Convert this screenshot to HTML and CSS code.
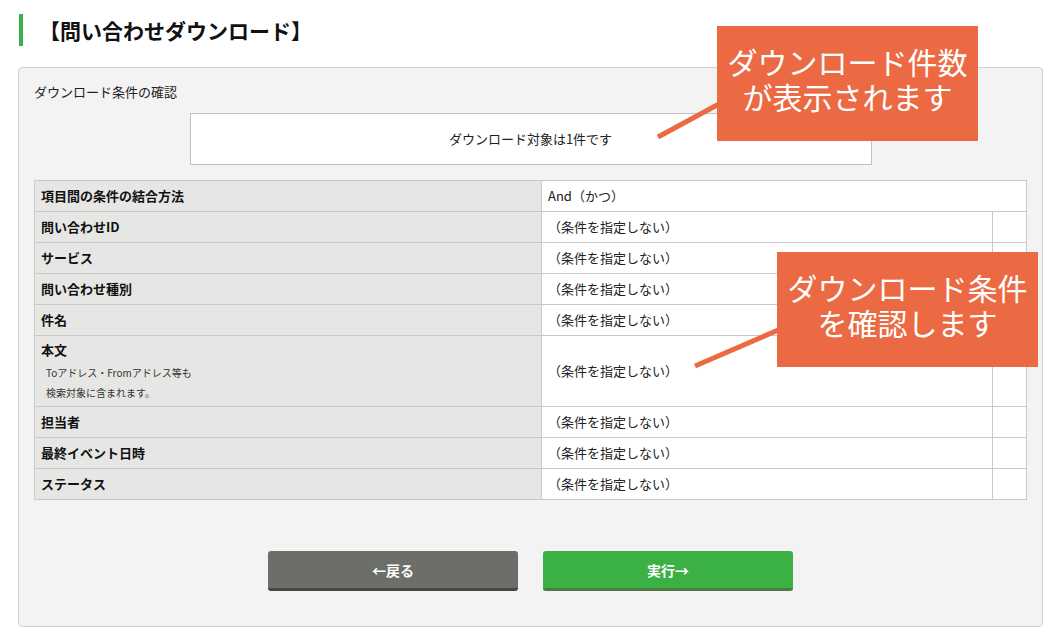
FILE: index.html
```html
<!DOCTYPE html>
<html lang="ja">
<head>
<meta charset="utf-8">
<title>問い合わせダウンロード</title>
<link rel="stylesheet" href="styles.css">
</head>
<body>
<div class="page">
  <h1 class="title">【問い合わせダウンロード】</h1>
  <section class="panel">
    <p class="panel-heading">ダウンロード条件の確認</p>
    <div class="count-box">ダウンロード対象は1件です</div>
    <table class="cond">
      <colgroup><col class="c-label"><col class="c-value"><col class="c-extra"></colgroup>
      <tr><th>項目間の条件の結合方法</th><td colspan="2">And（かつ）</td></tr>
      <tr><th>問い合わせID</th><td>（条件を指定しない）</td><td></td></tr>
      <tr><th>サービス</th><td>（条件を指定しない）</td><td></td></tr>
      <tr><th>問い合わせ種別</th><td>（条件を指定しない）</td><td></td></tr>
      <tr><th>件名</th><td>（条件を指定しない）</td><td></td></tr>
      <tr class="tall"><th><span class="lbl">本文</span><span class="note">Toアドレス・Fromアドレス等も</span><span class="note">検索対象に含まれます。</span></th><td>（条件を指定しない）</td><td></td></tr>
      <tr><th>担当者</th><td>（条件を指定しない）</td><td></td></tr>
      <tr><th>最終イベント日時</th><td>（条件を指定しない）</td><td></td></tr>
      <tr><th>ステータス</th><td>（条件を指定しない）</td><td></td></tr>
    </table>
    <div class="actions">
      <button class="btn btn-back">←戻る</button>
      <button class="btn btn-run">実行→</button>
    </div>
  </section>
  <svg class="pointers" width="1052" height="636" viewBox="0 0 1052 636">
    <line x1="658" y1="137" x2="730" y2="98" />
    <line x1="695" y1="366" x2="790" y2="325" />
  </svg>
  <div class="callout callout-count">ダウンロード件数<br>が表示されます</div>
  <div class="callout callout-cond">ダウンロード条件<br>を確認します</div>
</div>
</body>
</html>
```

FILE: styles.css
```css
html, body {
  margin: 0;
  padding: 0;
  background: #ffffff;
}

body {
  font-family: "Noto Sans CJK JP", "Noto Sans", sans-serif;
  color: #222222;
}

.page {
  position: relative;
  width: 1052px;
  height: 636px;
  box-sizing: border-box;
  padding: 14px 9px 0 18px;
  overflow: hidden;
}

.title {
  margin: 0 0 21px 1px;
  border-left: 4px solid #3cb14a;
  padding-left: 16px;
  font-size: 21px;
  font-weight: bold;
  line-height: 32px;
  color: #111111;
}

.panel {
  background: #f3f3f3;
  border: 1px solid #d2d2d2;
  border-radius: 4px;
  padding: 14px 15px 35px;
}

.panel-heading {
  margin: 0;
  font-size: 13px;
  line-height: 20px;
  color: #222222;
}

.count-box {
  width: 682px;
  height: 52px;
  box-sizing: border-box;
  margin: 11px auto 0;
  background: #ffffff;
  border: 1px solid #c2c2c2;
  font-size: 13px;
  line-height: 50px;
  text-align: center;
  color: #222222;
}

.cond {
  width: 100%;
  margin-top: 15px;
  border-collapse: collapse;
  table-layout: fixed;
  font-size: 13px;
}

.c-label { width: 507px; }
.c-extra { width: 34px; }

.cond th,
.cond td {
  border: 1px solid #c9c9c9;
  height: 30px;
  padding: 0 6px;
  line-height: 20px;
  text-align: left;
  vertical-align: middle;
}

.cond th {
  background: #e6e7e4;
  font-weight: bold;
  color: #111111;
}

.cond td {
  background: #ffffff;
  color: #222222;
}

.cond .tall th {
  height: auto;
  padding-top: 4px;
  padding-bottom: 3px;
  vertical-align: top;
}

.lbl {
  display: block;
}

.note {
  display: block;
  margin: 3px 0 0 5px;
  font-size: 10px;
  font-weight: normal;
  line-height: 20px;
  color: #333333;
}

.note + .note {
  margin-top: 0;
}

.actions {
  display: flex;
  justify-content: center;
  gap: 25px;
  margin-top: 51px;
}

.btn {
  width: 250px;
  height: 40px;
  box-sizing: border-box;
  border: none;
  border-bottom: 3px solid;
  border-radius: 3px;
  font-family: "Noto Sans CJK JP", "Noto Sans", sans-serif;
  font-size: 14px;
  font-weight: bold;
  color: #ffffff;
  padding: 0;
  cursor: pointer;
}

.btn-back {
  background: #6b6e69;
  border-bottom-color: #464646;
}

.btn-run {
  background: #3bb045;
  border-bottom-color: #4e7a41;
}

.pointers {
  position: absolute;
  left: 0;
  top: 0;
  pointer-events: none;
}

.pointers line {
  stroke: #ec6a43;
  stroke-width: 5;
}

.callout {
  position: absolute;
  width: 261px;
  height: 115px;
  box-sizing: border-box;
  padding-bottom: 9px;
  display: flex;
  align-items: center;
  justify-content: center;
  background: #ec6a43;
  color: #ffffff;
  font-size: 30px;
  line-height: 35px;
  text-align: center;
}

.callout-count {
  left: 717px;
  top: 26px;
}

.callout-cond {
  left: 777px;
  top: 252px;
}
```
